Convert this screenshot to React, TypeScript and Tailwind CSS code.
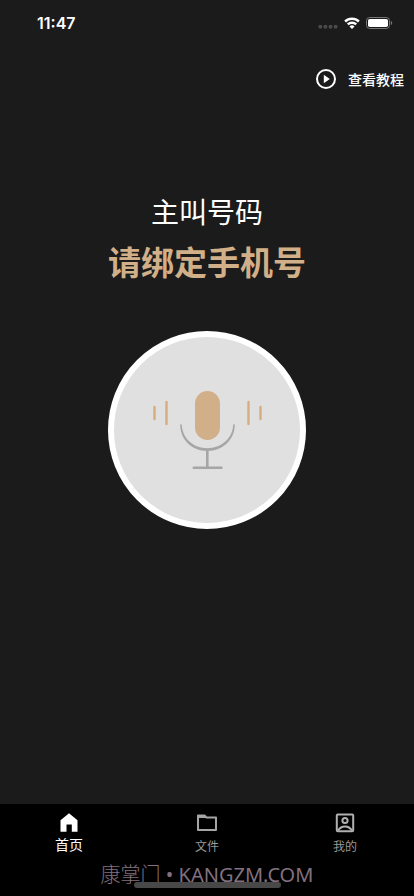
import React from 'react';

const StatusBar: React.FC = () => (
  <div className="flex h-[46px] items-center justify-between pl-[37px] pr-[21px] font-['Inter','Liberation_Sans',sans-serif]">
    <time className="text-[16px] leading-6 font-semibold">11:47</time>
    <div className="flex items-center gap-[6px]">
      <svg className="mt-[8px] h-1 w-5" viewBox="0 0 20 4" fill="#4b4b4b">
        <rect x="0.5" width="3.6" height="3.6" rx="1" />
        <rect x="5.6" width="3.6" height="3.6" rx="1" />
        <rect x="10.7" width="3.6" height="3.6" rx="1" />
        <rect x="15.8" width="3.6" height="3.6" rx="1" />
      </svg>
      <svg className="h-3 w-4" viewBox="0 0 16 12" fill="none" stroke="#fff" strokeWidth="2.5">
        <path d="M1.1 4.5a9.9 9.9 0 0 1 13.8 0" />
        <path d="M3.8 7.4a6.1 6.1 0 0 1 8.4 0" />
        <path d="M8 11.9 5.5 9.4a3.6 3.6 0 0 1 5 0z" fill="#fff" stroke="none" />
      </svg>
      <svg className="h-3 w-[27px]" viewBox="0 0 27 12">
        <rect x="0.5" y="0.5" width="23" height="11" rx="3.2" fill="none" stroke="#777" />
        <rect x="2" y="2" width="20" height="8" rx="1.8" fill="#fff" />
        <path d="M24.8 4v4c.8-.3 1.4-1.1 1.4-2s-.6-1.7-1.4-2z" fill="#777" />
      </svg>
    </div>
  </div>
);

const Microphone: React.FC = () => (
  <svg className="h-full w-full" viewBox="0 0 186 186" fill="none" strokeLinecap="round">
    <rect x="81" y="54" width="25" height="49" rx="12.5" fill="#d1af88" />
    <g stroke="#d5ad7f" strokeWidth="2.4">
      <path d="M40.5 70v12" />
      <path d="M52.5 65v22" />
      <path d="M134.5 65v22" />
      <path d="M146.5 70v12" />
    </g>
    <path
      d="M66.2 88a.8.8 0 0 1 1.6 0C68.5 102 80 111.2 93.3 111.2S118.5 102 119.2 88a.8.8 0 0 1 1.6 0C120.5 103 108.5 114 93.3 114S66.5 103 66.2 88z"
      fill="#a6a6a6"
    />
    <path d="M93.3 113v17M79.8 130.7h27.6" stroke="#a6a6a6" strokeWidth="2.6" />
  </svg>
);

const HomeIcon: React.FC = () => (
  <svg className="h-6 w-6" viewBox="0 0 24 24" fill="#fff">
    <path d="M12 2.3 20.5 9.3V20.7H14.8V13.5H9.5V20.7H3.5V9.3z" />
  </svg>
);

const FolderIcon: React.FC = () => (
  <svg className="h-6 w-6" viewBox="0 0 24 24" fill="none" stroke="#a5a5a5" strokeWidth="2" strokeLinejoin="round">
    <path d="M3 19V4.5h6.500l2 2H21V19z" />
    <path d="M3 6h8" />
  </svg>
);

const ProfileIcon: React.FC = () => (
  <svg className="h-6 w-6" viewBox="0 0 24 24" fill="none" stroke="#b0b0b0" strokeWidth="2">
    <rect x="3.8" y="3.5" width="16.4" height="16.8" rx="1" />
    <circle cx="12" cy="9.5" r="2.6" />
    <path d="M5 19.5c1.8-2.8 4-4 7-4s5.2 1.2 7 4" />
  </svg>
);

const App: React.FC = () => {
  return (
    <div className="relative flex min-h-screen flex-col bg-[#1b1b1b] font-['Noto_Sans_CJK_SC',sans-serif] text-white">
      <StatusBar />

      <header className="flex justify-end px-[10px] pt-[21px]">
        <button type="button" className="flex items-center gap-3 text-[14px] leading-6 font-medium">
          <svg className="h-5 w-5" viewBox="0 0 20 20" fill="none">
            <circle cx="10" cy="10" r="9" stroke="#fff" strokeWidth="2" />
            <path d="M7.8 5.8v8.4l6-4.2z" fill="#fff" />
          </svg>
          查看教程
        </button>
      </header>

      <main className="flex flex-1 flex-col items-center pt-[100px]">
        <h1 className="text-[28px] leading-10 font-normal">主叫号码</h1>
        <p className="mt-[6px] text-[33px] leading-12 font-bold text-[#d1af88]">请绑定手机号</p>
        <button
          type="button"
          aria-label="录音"
          className="mt-[46px] h-[198px] w-[198px] rounded-full border-6 border-white bg-[#e0e0e0]"
        >
          <Microphone />
        </button>
      </main>

      <nav className="grid h-[92px] grid-cols-3 bg-black pt-[7px]">
        <a href="#home" className="flex flex-col items-center text-[14px] leading-[18px]">
          <HomeIcon />
          首页
        </a>
        <a href="#files" className="flex flex-col items-center text-[12px] leading-[22px] text-[#999999]">
          <FolderIcon />
          文件
        </a>
        <a href="#profile" className="flex flex-col items-center text-[12px] leading-[22px] text-[#999999]">
          <ProfileIcon />
          我的
        </a>
      </nav>

      {/* site mark, with the home indicator above it */}
      <div className="absolute inset-x-0 bottom-2 text-center font-['Noto_Sans','Noto_Sans_CJK_SC',sans-serif] text-[20px] leading-[26px] font-light text-[#83707f]">
        康掌门 <span className="font-normal">• KANGZM.COM</span>
      </div>
      <div className="absolute inset-x-0 bottom-2 flex justify-center">
        <div className="h-[6px] w-[147px] rounded-full bg-[#484848]" />
      </div>
    </div>
  );
};

export default App;
